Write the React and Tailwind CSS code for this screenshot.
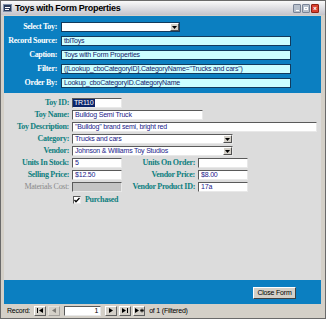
import React from 'react'

const LBL = 'font-["Liberation_Serif",serif] font-bold text-[8px] leading-none tracking-[-0.3px] text-right whitespace-nowrap'
const TXT = 'font-["Liberation_Sans",Arial,sans-serif] text-[7px] leading-[8px] tracking-[-0.2px] whitespace-nowrap overflow-x-clip'
const SUNKEN = 'border border-t-[#5a5a5a] border-l-[#5a5a5a] border-b-[#e8e8e8] border-r-[#e8e8e8]'

function DropBtn() {
  return (
    <div className="w-[9px] h-[8px] bg-[#d4d0c8] border border-t-white border-l-white border-b-[#505050] border-r-[#505050] flex items-center justify-center shrink-0">
      <svg width="5" height="3" viewBox="0 0 5 3"><path d="M0 0h5L2.5 3z" fill="#000" /></svg>
    </div>
  )
}

function HeadRow({ label, children }) {
  return (
    <div className="flex items-center gap-[4px] h-[10px]">
      <div className={`${LBL} w-[53px] text-white`}>{label}</div>
      {children}
    </div>
  )
}

function CyanBox({ text }) {
  return (
    <div className={`${TXT} w-[230px] h-[10px] bg-[#ccffff] border border-[#123a5c] text-[#14206a] px-[2px] flex items-center`}>
      {text}
    </div>
  )
}

function Box({ w, text, gray, combo }) {
  return (
    <div className={`${TXT} ${w} h-[10px] ${gray ? 'bg-[#c4c4c4]' : 'bg-white'} ${SUNKEN} text-[#1a1a8a] pl-[2px] flex items-center justify-between shrink-0`}>
      <span>{text}</span>
      {combo && <DropBtn />}
    </div>
  )
}

function NavBtn({ children, dim }) {
  return (
    <div className={`w-[12px] h-[10px] bg-[#d4d0c8] border border-t-white border-l-white border-b-[#606060] border-r-[#606060] flex items-center justify-center ${dim ? 'opacity-40' : ''}`}>
      {children}
    </div>
  )
}

export default function App() {
  return (
    <div className="w-[326px] h-[319px] bg-[#d4d0c8] border border-[#6a6a6a] flex flex-col overflow-hidden">
      {/* title bar */}
      <div className="h-[14px] shrink-0 bg-gradient-to-b from-[#fafafa] to-[#c4c4cc] flex items-center px-[2px] gap-[3px]">
        <div className="w-[9px] h-[8px] bg-[#2a3a5a] border border-[#8090a8] flex flex-col justify-center gap-[1px] px-[1px]">
          <div className="h-px bg-white" />
          <div className="h-px bg-white w-[4px]" />
        </div>
        <span className="font-['Liberation_Sans',Arial,sans-serif] font-bold text-[9px] leading-none tracking-[-0.3px] text-black flex-1">Toys with Form Properties</span>
        <div className="flex gap-px pr-[4px]">
          <div className="w-[8px] h-[9px] rounded-[1px] bg-[#b8c0cc] border border-[#7a8496] flex items-end justify-center pb-[1px]"><div className="w-[3px] h-px bg-white" /></div>
          <div className="w-[8px] h-[9px] rounded-[1px] bg-[#b8c0cc] border border-[#7a8496] flex items-center justify-center"><div className="w-[4px] h-[3px] border border-white" /></div>
          <div className="w-[8px] h-[9px] rounded-[1px] bg-[#d84030] border border-[#902010] flex items-center justify-center text-white text-[7px] font-bold leading-none">×</div>
        </div>
      </div>

      <div className="flex-1 flex flex-col pl-[3px] pr-[4px] pt-[1px] pb-px">
        {/* form header */}
        <div className="h-[77px] shrink-0 bg-[#0b7fc1] pt-[6px] flex flex-col gap-[4px]">
          <HeadRow label="Select Toy:">
            <div className="w-[119px] h-[10px] bg-white border border-[#123a5c] flex justify-end items-center">
              <DropBtn />
            </div>
          </HeadRow>
          <HeadRow label="Record Source:"><CyanBox text="tblToys" /></HeadRow>
          <HeadRow label="Caption:"><CyanBox text="Toys with Form Properties" /></HeadRow>
          <HeadRow label="Filter:"><CyanBox text={'([Lookup_cboCategoryID].CategoryName="Trucks and cars")'} /></HeadRow>
          <HeadRow label="Order By:"><CyanBox text="Lookup_cboCategoryID.CategoryName" /></HeadRow>
        </div>

        {/* detail */}
        <div className="flex-1 bg-[#dcdcdc] pt-[5px] flex flex-col gap-[2px]">
          <div className="flex items-center gap-[3px] h-[10px]">
            <div className={`${LBL} w-[65px] text-[#0e7f7f]`}>Toy ID:</div>
            <div className={`${TXT} w-[50px] h-[10px] bg-white ${SUNKEN} flex items-center`}>
              <span className="bg-[#0a246a] text-white px-px">TR110</span>
            </div>
          </div>
          <div className="flex items-center gap-[3px] h-[10px]">
            <div className={`${LBL} w-[65px] text-[#0e7f7f]`}>Toy Name:</div>
            <Box w="w-[131px]" text="Bulldog Semi Truck" />
          </div>
          <div className="flex items-center gap-[3px] h-[10px]">
            <div className={`${LBL} w-[65px] text-[#0e7f7f]`}>Toy Description:</div>
            <Box w="w-[245px]" text={'"Bulldog" brand semi, bright red'} />
          </div>
          <div className="flex items-center gap-[3px] h-[10px]">
            <div className={`${LBL} w-[65px] text-[#0e7f7f]`}>Category:</div>
            <Box w="w-[161px]" text="Trucks and cars" combo />
          </div>
          <div className="flex items-center gap-[3px] h-[10px]">
            <div className={`${LBL} w-[65px] text-[#0e7f7f]`}>Vendor:</div>
            <Box w="w-[161px]" text="Johnson & Williams Toy Studios" combo />
          </div>
          <div className="flex items-center gap-[3px] h-[10px]">
            <div className={`${LBL} w-[65px] text-[#0e7f7f]`}>Units In Stock:</div>
            <Box w="w-[50px]" text="5" />
            <div className={`${LBL} w-[70px] text-[#0e7f7f]`}>Units On Order:</div>
            <Box w="w-[50px]" text="" />
          </div>
          <div className="flex items-center gap-[3px] h-[10px]">
            <div className={`${LBL} w-[65px] text-[#0e7f7f]`}>Selling Price:</div>
            <Box w="w-[50px]" text="$12.50" />
            <div className={`${LBL} w-[70px] text-[#0e7f7f]`}>Vendor Price:</div>
            <Box w="w-[50px]" text="$8.00" />
          </div>
          <div className="flex items-center gap-[3px] h-[10px]">
            <div className={`${LBL} w-[65px] text-[#8a8a8a] font-normal`}>Materials Cost:</div>
            <Box w="w-[50px]" text="" gray />
            <div className={`${LBL} w-[70px] text-[#0e7f7f]`}>Vendor Product ID:</div>
            <Box w="w-[50px]" text="17a" />
          </div>
          <div className="flex items-center gap-[4px] h-[10px] pl-[69px] mt-px">
            <div className={`w-[8px] h-[8px] bg-white ${SUNKEN} flex items-center justify-center`}>
              <svg width="6" height="6" viewBox="0 0 6 6"><path d="M0.5 3l1.5 1.7L5.5 1" stroke="#000" strokeWidth="1.3" fill="none" /></svg>
            </div>
            <span className={`${LBL} text-[#0e7f7f]`}>Purchased</span>
          </div>
        </div>

        {/* footer */}
        <div className="h-[24px] shrink-0 bg-[#0b7fc1] flex items-center justify-end pr-[25px] pt-[1px]">
          <div className={`${TXT} w-[43px] h-[12px] bg-[#d4d0c8] border border-t-white border-l-white border-b-[#404040] border-r-[#404040] text-black flex items-center justify-center`}>
            Close Form
          </div>
        </div>

        {/* navigation bar */}
        <div className="h-[13px] shrink-0 bg-[#d4d0c8] flex items-center gap-[2px] pl-[3px]">
          <span className={`${TXT} text-black mr-[2px]`}>Record:</span>
          <NavBtn>
            <svg width="6" height="5" viewBox="0 0 6 5"><path d="M0 0h1v5H0zM6 0v5L2 2.5z" fill="#000" /></svg>
          </NavBtn>
          <NavBtn dim>
            <svg width="4" height="5" viewBox="0 0 4 5"><path d="M4 0v5L0 2.5z" fill="#000" /></svg>
          </NavBtn>
          <div className={`${TXT} w-[37px] h-[10px] bg-white ${SUNKEN} text-black flex items-center justify-end pr-[2px] mx-[2px]`}>1</div>
          <NavBtn>
            <svg width="4" height="5" viewBox="0 0 4 5"><path d="M0 0v5L4 2.5z" fill="#000" /></svg>
          </NavBtn>
          <NavBtn>
            <svg width="6" height="5" viewBox="0 0 6 5"><path d="M0 0v5L4 2.5zM5 0h1v5H5z" fill="#000" /></svg>
          </NavBtn>
          <NavBtn>
            <svg width="9" height="5" viewBox="0 0 9 5"><path d="M0 0v5L4 2.5z" fill="#000" /><path d="M5 2.5h4M7 0.5v4M5.6 1l2.8 3M8.4 1L5.6 4" stroke="#000" strokeWidth="0.7" /></svg>
          </NavBtn>
          <span className={`${TXT} text-black ml-[2px]`}>of 1 (Filtered)</span>
        </div>
      </div>
    </div>
  )
}
